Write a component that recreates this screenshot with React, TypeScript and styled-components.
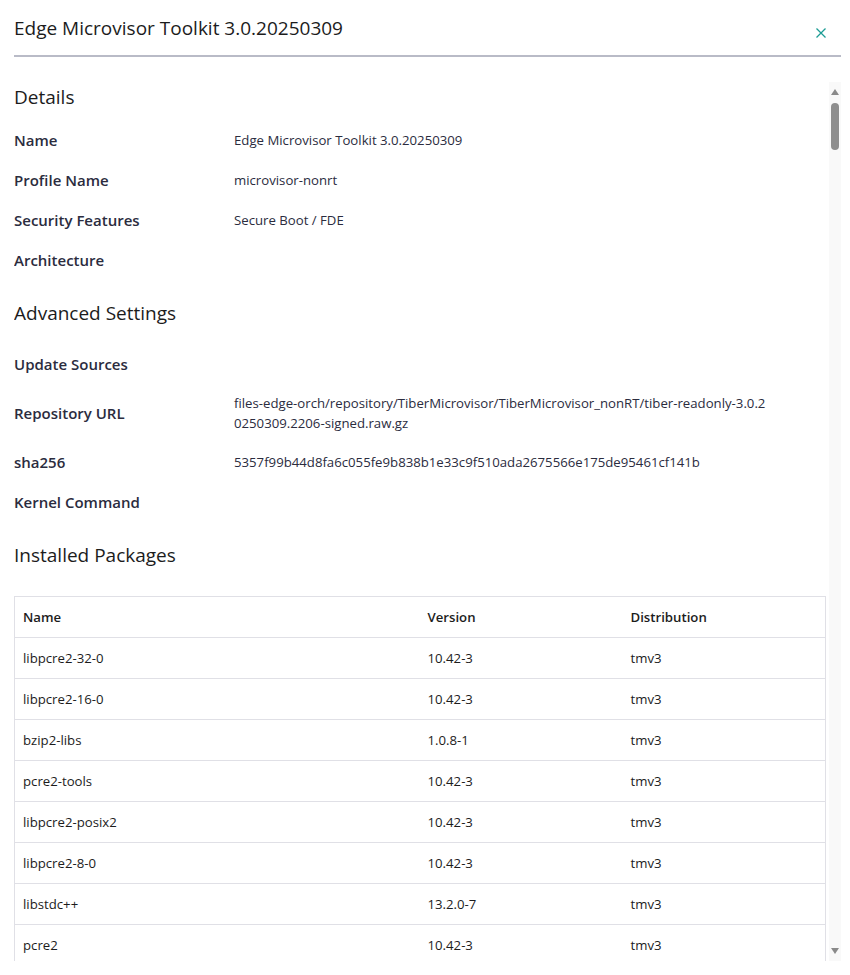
import React from 'react';
import styled, { createGlobalStyle } from 'styled-components';

const GlobalStyle = createGlobalStyle`
  html, body {
    margin: 0;
    padding: 0;
    background: #ffffff;
  }
  body {
    font-family: "Open Sans", "Noto Sans", sans-serif;
    color: #2b2c3e;
  }
`;

const packages = [
  { name: 'libpcre2-32-0', version: '10.42-3', dist: 'tmv3' },
  { name: 'libpcre2-16-0', version: '10.42-3', dist: 'tmv3' },
  { name: 'bzip2-libs', version: '1.0.8-1', dist: 'tmv3' },
  { name: 'pcre2-tools', version: '10.42-3', dist: 'tmv3' },
  { name: 'libpcre2-posix2', version: '10.42-3', dist: 'tmv3' },
  { name: 'libpcre2-8-0', version: '10.42-3', dist: 'tmv3' },
  { name: 'libstdc++', version: '13.2.0-7', dist: 'tmv3' },
  { name: 'pcre2', version: '10.42-3', dist: 'tmv3' },
];

export default function App() {
  return (
    <>
      <GlobalStyle />
      <Drawer>
        <Header>
          <Title>Edge Microvisor Toolkit 3.0.20250309</Title>
          <CloseButton aria-label="Close">
            <svg width="10" height="10" viewBox="0 0 10 10">
              <path d="M0.5 0.5 L9.5 9.5 M9.5 0.5 L0.5 9.5" stroke="#1c9c94" strokeWidth="1.3" fill="none" />
            </svg>
          </CloseButton>
        </Header>
        <ScrollArea>
          <Content>
            <SectionTitle>Details</SectionTitle>
            <Fields>
              <Label>Name</Label>
              <Value>Edge Microvisor Toolkit 3.0.20250309</Value>
              <Label>Profile Name</Label>
              <Value>microvisor-nonrt</Value>
              <Label>Security Features</Label>
              <Value>Secure Boot / FDE</Value>
              <Label>Architecture</Label>
              <Value />
            </Fields>

            <SectionTitle>Advanced Settings</SectionTitle>
            <Fields $offset={17}>
              <Label>Update Sources</Label>
              <Value />
              <Label>Repository URL</Label>
              <Value $padded>
                files-edge-orch/repository/TiberMicrovisor/TiberMicrovisor_nonRT/tiber-readonly-3.0.20250309.2206-signed.raw.gz
              </Value>
              <Label>sha256</Label>
              <Value>5357f99b44d8fa6c055fe9b838b1e33c9f510ada2675566e175de95461cf141b</Value>
              <Label>Kernel Command</Label>
              <Value />
            </Fields>

            <SectionTitle>Installed Packages</SectionTitle>
            <Table>
              <thead>
                <tr>
                  <Th $width="405px">Name</Th>
                  <Th $width="203px">Version</Th>
                  <Th>Distribution</Th>
                </tr>
              </thead>
              <tbody>
                {packages.map((p) => (
                  <tr key={p.name}>
                    <Td>{p.name}</Td>
                    <Td>{p.version}</Td>
                    <Td>{p.dist}</Td>
                  </tr>
                ))}
              </tbody>
            </Table>
          </Content>
          <ScrollTrack>
            <ArrowButton>
              <svg width="8" height="6" viewBox="0 0 8 6">
                <polygon points="0,6 8,6 4,0" fill="#8a8a8a" />
              </svg>
            </ArrowButton>
            <Thumb />
            <TrackSpacer />
            <ArrowButton>
              <svg width="8" height="6" viewBox="0 0 8 6">
                <polygon points="0,0 8,0 4,6" fill="#8a8a8a" />
              </svg>
            </ArrowButton>
          </ScrollTrack>
        </ScrollArea>
      </Drawer>
    </>
  );
}

const Drawer = styled.div`
  width: 850px;
  height: 975px;
  display: flex;
  flex-direction: column;
  box-sizing: border-box;
  padding: 0 9px 14px 14px;
  overflow: hidden;
`;

const Header = styled.div`
  display: flex;
  align-items: flex-end;
  justify-content: space-between;
  height: 57px;
  flex-shrink: 0;
  border-bottom: 2px solid #b9bbc7;
  box-sizing: border-box;
  padding-bottom: 13px;
`;

const Title = styled.h1`
  margin: 0;
  font-size: 19px;
  font-weight: 400;
  color: #1c1c1c;
  line-height: 28px;
`;

const CloseButton = styled.button`
  border: none;
  background: none;
  padding: 0;
  margin: 0 15px 4px 0;
  width: 10px;
  height: 10px;
  display: flex;
  cursor: pointer;
`;

const ScrollArea = styled.div`
  flex: 1;
  min-height: 0;
  display: flex;
  gap: 2px;
  margin-top: 25px;
`;

const Content = styled.div`
  flex: 1;
  min-width: 0;
  overflow: hidden;
  padding-top: 1px;
`;

const ScrollTrack = styled.div`
  width: 12px;
  flex-shrink: 0;
  background: #f9f9f9;
  display: flex;
  flex-direction: column;
  align-items: center;
`;

const ArrowButton = styled.div`
  height: 20px;
  display: flex;
  align-items: center;
  justify-content: center;
`;

const Thumb = styled.div`
  width: 8px;
  height: 47px;
  margin-top: 1px;
  border-radius: 4px;
  background: #8e8e8e;
`;

const TrackSpacer = styled.div`
  flex: 1;
`;

const SectionTitle = styled.h2`
  margin: 0 0 9px;
  font-size: 19px;
  font-weight: 400;
  color: #1c1c1c;
  line-height: 28px;
`;

const Fields = styled.div<{ $offset?: number }>`
  display: grid;
  grid-template-columns: 220px 536px;
  grid-auto-rows: minmax(40px, auto);
  align-items: center;
  margin: ${(p) => p.$offset ?? 0}px 0 19px;
`;

const Label = styled.div`
  font-size: 15px;
  font-weight: 600;
  color: #2b2c3e;
`;

const Value = styled.div<{ $padded?: boolean }>`
  font-size: 13.2px;
  line-height: 20px;
  color: #2b2c3e;
  word-break: break-all;
  white-space: ${(p) => (p.$padded ? 'normal' : 'nowrap')};
  padding: ${(p) => (p.$padded ? '9px 0' : '0')};
`;

const Table = styled.table`
  width: 812px;
  border-collapse: collapse;
  border: 1px solid #e0e0e6;
  margin-top: 27px;
  font-size: 13.2px;
  color: #1c1c1c;
`;

const Th = styled.th<{ $width?: string }>`
  text-align: left;
  font-weight: 600;
  height: 41px;
  padding: 0 8px;
  width: ${(p) => p.$width ?? 'auto'};
  border-bottom: 1px solid #e0e0e6;
  box-sizing: border-box;
`;

const Td = styled.td`
  height: 41px;
  padding: 0 8px;
  border-bottom: 1px solid #e0e0e6;
  box-sizing: border-box;
`;
